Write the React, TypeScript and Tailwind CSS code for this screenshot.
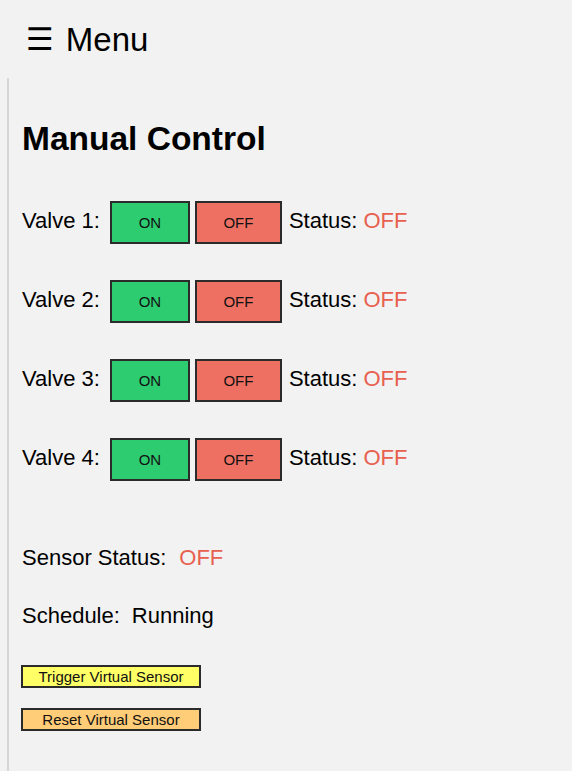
/**
 * Manual valve control panel — header with menu toggle, four valve rows,
 * sensor / schedule readouts and the virtual sensor buttons.
 */
const valves = [1, 2, 3, 4];

function ValveRow({ n }: { n: number }) {
  return (
    <div className="flex h-[43px] items-center text-[22px] leading-[25px]">
      <span className="mb-[4px]">Valve {n}:</span>
      <button
        type="button"
        className="ml-[10px] h-[43px] w-[80px] border-2 border-[#2b2b2b] bg-[#2ecc71] text-[15px] leading-none text-[#111]"
      >
        ON
      </button>
      <button
        type="button"
        className="ml-[5px] h-[43px] w-[87px] border-2 border-[#2b2b2b] bg-[#ee7063] text-[15px] leading-none text-[#111]"
      >
        OFF
      </button>
      <span className="mb-[4px] ml-[7px]">Status:</span>
      <span className="mb-[4px] ml-[6px] text-[#e8604f]">OFF</span>
    </div>
  );
}

export default function App() {
  return (
    <div
      className="min-h-[771px] bg-[#f2f2f2] text-black"
      style={{ fontFamily: '"Liberation Sans", Arial, sans-serif' }}
    >
      <header className="h-[78px] pl-[26px] pt-[21px]">
        <p className="flex items-center text-[32px] leading-[37px]">
          <span style={{ fontFamily: '"DejaVu Sans", sans-serif' }} className="text-[31px]">
            ☰
          </span>
          <span className="ml-[12px] text-[33px]">Menu</span>
        </p>
      </header>

      <main className="ml-[7px] min-h-[693px] border-l-2 border-[#d6d6d6] pl-[13px] pt-[42px]">
        <h1 className="text-[33.5px] font-bold leading-[37px]">Manual Control</h1>

        <div className="mt-[44px] flex flex-col gap-[36px]">
          {valves.map((n) => (
            <ValveRow key={n} n={n} />
          ))}
        </div>

        <p className="mt-[64px] text-[22px] leading-[25px]">
          Sensor Status:<span className="ml-[13px] text-[#e8604f]">OFF</span>
        </p>
        <p className="mt-[33px] text-[22px] leading-[25px]">
          Schedule:<span className="ml-[12px]">Running</span>
        </p>

        <div className="mt-[37px] flex flex-col gap-[20px]">
          <button
            type="button"
            className="-ml-px h-[23px] w-[180px] border-2 border-[#2b2b2b] bg-[#ffff66] text-[15px] leading-none text-[#111]"
          >
            Trigger Virtual Sensor
          </button>
          <button
            type="button"
            className="-ml-px h-[23px] w-[180px] border-2 border-[#2b2b2b] bg-[#ffcc77] text-[15px] leading-none text-[#111]"
          >
            Reset Virtual Sensor
          </button>
        </div>
      </main>
    </div>
  );
}
